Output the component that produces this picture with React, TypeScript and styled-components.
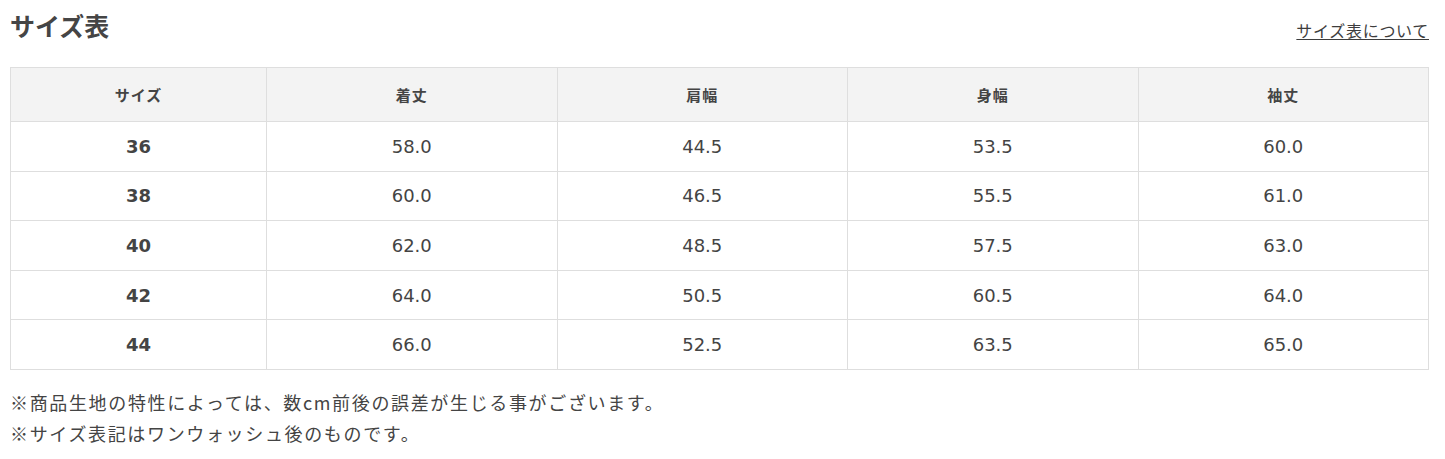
import React from 'react'
import styled, {createGlobalStyle} from 'styled-components'

const GlobalStyle = createGlobalStyle`
  body {
    margin: 0;
    background: #ffffff;
    font-family: "DejaVu Sans", "Noto Sans CJK JP", sans-serif;
    color: #3d3d3d;
  }
`

const headers = ['サイズ', '着丈', '肩幅', '身幅', '袖丈']

const rows = [
    ['36', '58.0', '44.5', '53.5', '60.0'],
    ['38', '60.0', '46.5', '55.5', '61.0'],
    ['40', '62.0', '48.5', '57.5', '63.0'],
    ['42', '64.0', '50.5', '60.5', '64.0'],
    ['44', '66.0', '52.5', '63.5', '65.0'],
]

const notes = [
    '※商品生地の特性によっては、数cm前後の誤差が生じる事がございます。',
    '※サイズ表記はワンウォッシュ後のものです。',
]

const App = () => {
    return (
        <>
            <GlobalStyle/>
            <Page>
                <Header>
                    <Title>サイズ表</Title>
                    <GuideLink href="#">サイズ表について</GuideLink>
                </Header>
                <Table>
                    <colgroup>
                        <col style={{width: '256px'}}/>
                        <col/>
                        <col/>
                        <col/>
                        <col/>
                    </colgroup>
                    <thead>
                    <tr>
                        {headers.map(h => <Th key={h}>{h}</Th>)}
                    </tr>
                    </thead>
                    <tbody>
                    {rows.map(row => (
                        <tr key={row[0]}>
                            {row.map((cell, i) => (
                                <Td key={i} $bold={i === 0}>{cell}</Td>
                            ))}
                        </tr>
                    ))}
                    </tbody>
                </Table>
                <Notes>
                    {notes.map(n => <Note key={n}>{n}</Note>)}
                </Notes>
            </Page>
        </>
    )
}

const Page = styled.div`
  padding: 0 16px 0 10px;
`

const Header = styled.div`
  display: flex;
  justify-content: space-between;
  align-items: flex-start;
  height: 67px;
  padding-top: 8px;
  box-sizing: border-box;
`

const Title = styled.h2`
  margin: 0;
  font-family: "Noto Sans CJK JP", sans-serif;
  font-size: 25px;
  line-height: 34px;
  font-weight: 700;
  color: #454545;
`

const GuideLink = styled.a`
  margin-top: 11px;
  font-family: "Noto Sans CJK JP", sans-serif;
  font-size: 16px;
  line-height: 22px;
  letter-spacing: 0.7px;
  color: #3d3d3d;
  text-decoration: underline;
  text-underline-offset: 2px;
`

const Table = styled.table`
  width: 100%;
  border-collapse: collapse;
  table-layout: fixed;
  border: 1px solid #dedede;
`

const Th = styled.th`
  height: 53px;
  padding: 0;
  background: #f3f3f3;
  border: 1px solid #dedede;
  font-family: "Noto Sans CJK JP", sans-serif;
  font-size: 15px;
  font-weight: 700;
  letter-spacing: 1px;
  color: #444444;
  text-align: center;
`

const Td = styled.td<{ $bold?: boolean }>`
  height: 48.6px;
  padding: 0;
  border: 1px solid #dedede;
  font-size: 18px;
  font-weight: ${p => (p.$bold ? 700 : 400)};
  color: #444444;
  text-align: center;
`

const Notes = styled.div`
  margin-top: 17px;
`

const Note = styled.p`
  margin: 0;
  font-family: "Noto Sans CJK JP", sans-serif;
  font-size: 18px;
  line-height: 31px;
  letter-spacing: 1.65px;
  color: #444444;
`

export default App
